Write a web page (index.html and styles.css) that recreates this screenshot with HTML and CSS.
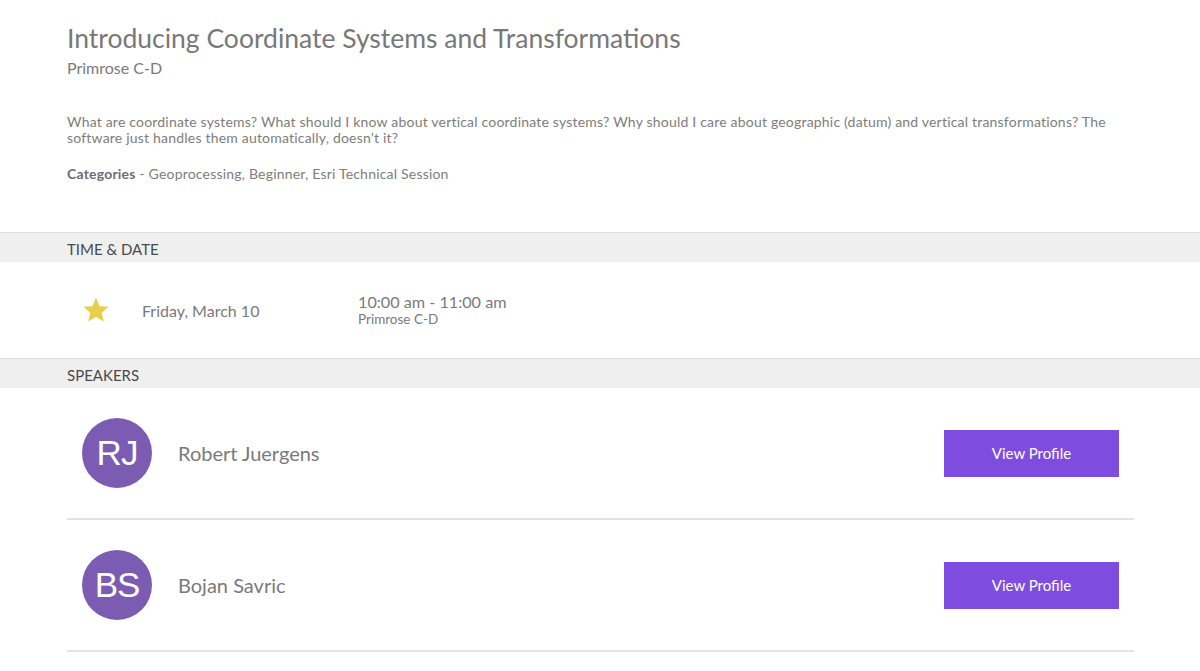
FILE: index.html
```html
<!DOCTYPE html>
<html lang="en">
<head>
<meta charset="utf-8">
<title>Introducing Coordinate Systems and Transformations</title>
<link rel="stylesheet" href="styles.css">
</head>
<body>
<main class="page">
  <header class="intro wrap">
    <h1 class="title">Introducing Coordinate Systems and Transformations</h1>
    <div class="room">Primrose C-D</div>
    <p class="desc">What are coordinate systems? What should I know about vertical coordinate systems? Why should I care about geographic (datum) and vertical transformations? The software just handles them automatically, doesn’t it?</p>
    <p class="cats"><strong>Categories</strong> - Geoprocessing, Beginner, Esri Technical Session</p>
  </header>

  <section>
    <h2 class="band"><span class="wrap">TIME &amp; DATE</span></h2>
    <div class="wrap time-row">
      <svg class="star" width="28" height="28" viewBox="0 0 24 24" aria-hidden="true"><path d="M12 1.6l3.1 7.1 7.7.6-5.9 5 1.8 7.6L12 17.9l-6.7 4 1.8-7.6-5.9-5 7.7-.6z" fill="#e6cf4a"/></svg>
      <div class="date">Friday, March 10</div>
      <div class="when">
        <div class="hours">10:00 am - 11:00 am</div>
        <div class="loc">Primrose C-D</div>
      </div>
    </div>
  </section>

  <section>
    <h2 class="band"><span class="wrap">SPEAKERS</span></h2>
    <div class="wrap">
      <div class="speaker">
        <div class="avatar">RJ</div>
        <div class="name">Robert Juergens</div>
        <a class="btn" href="#">View Profile</a>
      </div>
      <div class="speaker">
        <div class="avatar">BS</div>
        <div class="name">Bojan Savric</div>
        <a class="btn" href="#">View Profile</a>
      </div>
    </div>
  </section>
</main>
</body>
</html>
```

FILE: styles.css
```css
* { box-sizing: border-box; }
html, body { margin: 0; padding: 0; background: #fff; }
body {
  font-family: Lato, "Open Sans", sans-serif;
  color: #7a7a7a;
  overflow: hidden;
}
.wrap {
  display: block;
  margin-left: 67px;
  width: 1067px;
}
.intro { padding-top: 23px; padding-bottom: 50px; }
.title {
  margin: 0;
  font-weight: 400;
  font-size: 26.5px;
  line-height: 30px;
  color: #787878;
}
.room {
  margin-top: 5px;
  font-size: 16px;
  line-height: 20px;
  color: #7a7a7a;
}
.desc {
  margin: 36px 0 0;
  font-size: 14px;
  line-height: 16px;
  color: #7d7d7d;
  letter-spacing: 0.2px;
}
.cats {
  margin: 20px 0 0;
  font-size: 14px;
  line-height: 16px;
  color: #7d7d7d;
  letter-spacing: 0.2px;
}
.cats strong { font-weight: 700; color: #6e6e6e; }
.band {
  margin: 0;
  background: #efefef;
  border-top: 1px solid #dcdcdc;
  height: 30px;
  padding-top: 2px;
  font-weight: 400;
  font-size: 15px;
  line-height: 29px;
  color: #4a4a4a;
}
.time-row {
  display: flex;
  align-items: center;
  height: 96px;
}
.star { margin-left: 15px; flex: none; }
.date {
  margin-left: 32px;
  width: 216px;
  font-size: 16px;
  color: #7a7a7a;
}
.hours { font-size: 16.2px; line-height: 18px; color: #7a7a7a; }
.loc { font-size: 13.5px; line-height: 16px; color: #7a7a7a; }
.speaker {
  display: flex;
  align-items: center;
  height: 132px;
  border-bottom: 2px solid #e3e3e3;
}
.avatar {
  margin-left: 15px;
  width: 70px;
  height: 70px;
  border-radius: 50%;
  background: #7b5cb2;
  color: #fff;
  font-family: "Liberation Sans", Arial, sans-serif;
  font-size: 35px;
  display: flex;
  align-items: center;
  justify-content: center;
  letter-spacing: -1px;
  flex: none;
}
.name {
  margin-left: 26px;
  flex: 1;
  font-size: 20px;
  color: #7a7a7a;
}
.btn {
  margin-right: 15px;
  width: 175px;
  height: 47px;
  background: #7e4de0;
  color: #fff;
  text-decoration: none;
  font-size: 15px;
  display: flex;
  align-items: center;
  justify-content: center;
}
```
